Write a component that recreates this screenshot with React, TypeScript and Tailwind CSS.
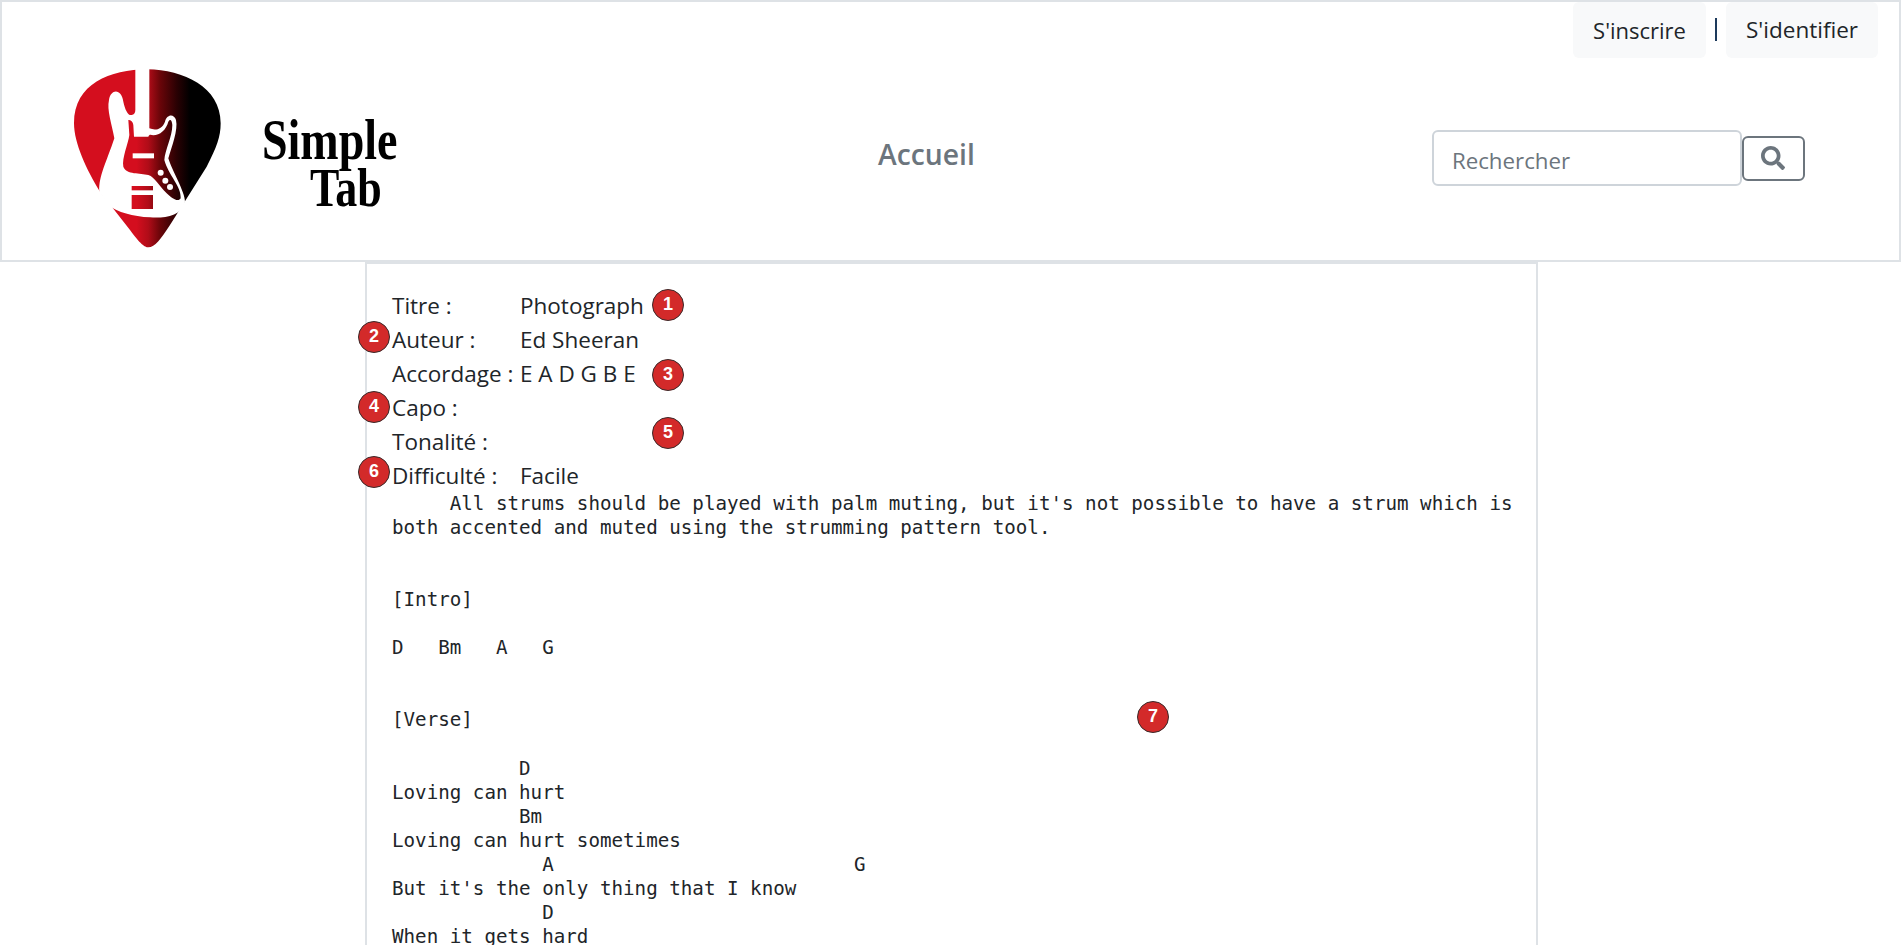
import React from 'react';
import { FaSearch } from 'react-icons/fa';

const tab = `     All strums should be played with palm muting, but it's not possible to have a strum which is
both accented and muted using the strumming pattern tool.


[Intro]

D   Bm   A   G


[Verse]

           D
Loving can hurt
           Bm
Loving can hurt sometimes
             A                          G
But it's the only thing that I know
             D
When it gets hard
`;

const infos = [
  { label: 'Titre :', value: 'Photograph' },
  { label: 'Auteur :', value: 'Ed Sheeran' },
  { label: 'Accordage :', value: 'E A D G B E' },
  { label: 'Capo :', value: '' },
  { label: 'Tonalité :', value: '' },
  { label: 'Difficulté :', value: 'Facile' },
];

const Badge = ({ n, className }: { n: number; className: string }) => (
  <div
    className={`absolute flex h-8 w-8 items-center justify-center rounded-full border border-[#3a2a2a] bg-[#d32a2a] pb-[2px] font-['Liberation_Sans',sans-serif] text-[18px] font-bold leading-none text-white ${className}`}
  >
    {n}
  </div>
);

const Logo = () => (
  <svg viewBox="0 0 510 600" className="h-[200px] w-[170px] shrink-0">
    <defs>
      <linearGradient id="pick" gradientUnits="userSpaceOnUse" x1="230" y1="0" x2="390" y2="0">
        <stop offset="0" stopColor="#d40e1e" />
        <stop offset="0.22" stopColor="#b00c18" />
        <stop offset="0.44" stopColor="#6a0509" />
        <stop offset="0.75" stopColor="#2a0103" />
        <stop offset="1" stopColor="#000000" />
      </linearGradient>
    </defs>
    <path
      d="M262 28 C150 30 42 70 42 190 C42 250 80 330 120 395 L210 510 C240 552 255 562 265 562 C285 562 302 538 330 495 L440 320 C470 262 482 230 482 190 C482 80 370 30 262 28 Z"
      fill="url(#pick)"
    />
    <path
      d="M226 20 L268 20 L268 205 C285 212 305 210 315 185 C320 162 342 160 348 180 C355 210 335 260 325 295 C335 330 375 395 375 425 C365 470 310 475 270 472 C220 470 170 455 148 438 L118 395 C115 350 140 305 163 235 C155 190 140 150 147 120 C152 85 185 85 190 125 C195 150 205 168 215 165 C222 165 226 158 226 150 Z"
      fill="#fff"
    />
    <path
      d="M205 180 C212 178 219 185 220 195 L222 230 L265 230 C268 222 272 224 280 226 C300 225 318 210 325 185 C330 175 336 180 337 195 C337 230 315 270 313 300 C325 345 365 380 362 415 C355 428 335 415 320 400 C295 375 285 352 265 345 C240 338 200 345 190 320 C185 295 205 250 208 225 Z"
      fill="url(#pick)"
    />
    <rect x="218" y="280" width="64" height="15" fill="#fff" />
    <circle cx="302" cy="338" r="9" fill="#fff" />
    <circle cx="316" cy="362" r="9" fill="#fff" />
    <circle cx="330" cy="381" r="9" fill="#fff" />
    <rect x="215" y="378" width="64" height="13" fill="url(#pick)" />
    <rect x="215" y="405" width="64" height="42" fill="url(#pick)" />
  </svg>
);

export default function App() {
  return (
    <div className="relative h-[945px] overflow-hidden bg-white font-['Open_Sans',sans-serif] text-[#212529]">
      <header className="h-[262px] border-2 border-[#dee2e6]">
        <div className="flex h-[56px] items-center justify-end pr-[21px]">
          <button className="h-[56px] w-[133px] rounded-md bg-[#f8f9fa] text-[22px]">S'inscrire</button>
          <div className="mx-[9px] mb-[2px] h-[23px] w-[2px] bg-[#1d3a5c]" />
          <button className="h-[56px] w-[152px] rounded-md bg-[#f8f9fa] text-[22.5px]">S'identifier</button>
        </div>
        <div className="flex items-start">
          <div className="ml-[58px] mt-[2px]">
            <Logo />
          </div>
          <div className="ml-[32px] mt-[57px] w-[134px] origin-top scale-y-125 whitespace-nowrap font-['Liberation_Serif',serif] text-[46px] font-bold leading-[39px] text-black">
            <div>Simple</div>
            <div className="pl-[48px] text-[44px]">Tab</div>
          </div>
          <div className="ml-[482px] mt-[72px] text-[28.3px] font-semibold leading-[48px] text-[#6c757d]">Accueil</div>
          <div className="ml-[457px] mt-[72px] flex items-center">
            <input
              placeholder="Rechercher"
              className="h-[56px] w-[310px] rounded-md border-2 border-[#ced4da] bg-white px-[18px] pt-[4px] text-[22.3px] placeholder:text-[#6c757d]"
            />
            <button className="flex h-[45px] w-[63px] items-center justify-center rounded-md border-2 border-[#6c757d] text-[#6c757d]">
              <FaSearch className="h-[24px] w-[24px]" />
            </button>
          </div>
        </div>
      </header>

      <main className="ml-[365px] w-[1173px] border-x-2 border-t-2 border-[#dee2e6] px-[25px] pt-[25px]">
        <div className="text-[22.5px] leading-[34px]">
          {infos.map((info) => (
            <div key={info.label} className="flex">
              <div className="w-[128px] shrink-0 whitespace-nowrap">{info.label}</div>
              <div>{info.value}</div>
            </div>
          ))}
        </div>
        <pre className="-mt-px font-['DejaVu_Sans_Mono',monospace] text-[19.2px] leading-[24.05px] text-[#212529]">{tab}</pre>
      </main>

      <Badge n={1} className="left-[652px] top-[289px]" />
      <Badge n={2} className="left-[358px] top-[321px]" />
      <Badge n={3} className="left-[652px] top-[359px]" />
      <Badge n={4} className="left-[358px] top-[391px]" />
      <Badge n={5} className="left-[652px] top-[417px]" />
      <Badge n={6} className="left-[358px] top-[456px]" />
      <Badge n={7} className="left-[1137px] top-[701px]" />
    </div>
  );
}
